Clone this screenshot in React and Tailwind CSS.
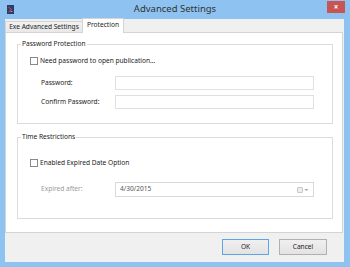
import React from "react";

function Checkbox() {
  return <div className="w-[8px] h-[8px] border border-[#8a8a8a] bg-white shrink-0" />;
}

function Group({ label, children, className = "" }) {
  return (
    <div className={"relative border border-[#dcdcdc] " + className}>
      <span className="absolute -top-[6px] left-[3px] bg-white px-[1px] leading-[10px] text-[6.6px] text-[#222]">
        {label}
      </span>
      {children}
    </div>
  );
}

export default function App() {
  return (
    <div className="w-[350px] h-[267px] bg-[#8ec3f1] flex flex-col font-['Noto_Sans',sans-serif] text-[#222] overflow-hidden">
      {/* Title bar */}
      <div className="h-[19px] shrink-0 grid grid-cols-[1fr_auto_1fr]">
        <div className="flex items-start pt-[5px] pl-[7px]">
          <svg width="7" height="9" viewBox="0 0 7 9">
            <rect x="0" y="0" width="7" height="9" fill="#2c3d66" />
            <path d="M1.5 2 L4.5 4.5 L1.5 7" stroke="#d9506a" strokeWidth="1" fill="none" />
            <path d="M3.5 6.5 L5.5 6.5" stroke="#e8a0b0" strokeWidth="0.8" />
          </svg>
        </div>
        <div className="flex items-center justify-center text-[9.5px] text-[#333] leading-none pb-[1px]">
          Advanced Settings
        </div>
        <div className="flex justify-end items-start pt-[1px] pr-[5px]">
          <div className="w-[18px] h-[12px] bg-[#c85454] flex items-center justify-center text-white text-[8px] leading-none font-bold">
            ×
          </div>
        </div>
      </div>

      {/* Content */}
      <div className="flex-1 ml-[5px] mr-[6px] mb-[5px] bg-[#f0f0f0] flex flex-col">
        {/* Tabs */}
        <div className="h-[13px] shrink-0 flex items-end text-[6.6px] leading-none">
          <div className="h-[11px] w-[78px] border border-b-0 border-[#d4d4d4] bg-gradient-to-b from-[#f2f2f2] to-[#e8e8e8] flex items-center justify-center">
            Exe Advanced Settings
          </div>
          <div className="relative z-10 -ml-[1px] -mb-[1px] h-[15px] w-[42px] border border-b-0 border-[#d4d4d4] bg-white flex items-start justify-center pt-[3px]">
            Protection
          </div>
        </div>

        {/* Panel */}
        <div className="h-[201px] shrink-0 mr-[1px] border border-[#d4d4d4] bg-white pt-[11px] pl-[11px] pr-[9px] flex flex-col text-[6.6px] leading-none">
          <Group label="Password Protection" className="h-[80px]">
            <div className="flex items-center mt-[12px] ml-[12px] gap-[2px]">
              <Checkbox />
              <span>Need password to open publication...</span>
            </div>
            <div className="flex items-center mt-[11px] ml-[23px]">
              <span className="w-[74px]">Password:</span>
              <div className="w-[199px] h-[14px] border border-[#e0e0e0] bg-white" />
            </div>
            <div className="flex items-center mt-[5px] ml-[23px]">
              <span className="w-[74px]">Confirm Password:</span>
              <div className="w-[199px] h-[14px] border border-[#e0e0e0] bg-white" />
            </div>
          </Group>

          <Group label="Time Restrictions" className="h-[82px] mt-[13px]">
            <div className="flex items-center mt-[21px] ml-[12px] gap-[2px]">
              <Checkbox />
              <span>Enabled Expired Date Option</span>
            </div>
            <div className="flex items-center mt-[15px] ml-[23px]">
              <span className="w-[74px] text-[#9a9a9a]">Expired after:</span>
              <div className="w-[199px] h-[15px] border border-[#d8d8d8] bg-white flex items-center pl-[4px] pr-[4px]">
                <span className="flex-1 text-[#555]">4/30/2015</span>
                <div className="w-[6px] h-[6px] border border-[#c8c8c8] bg-[#eeeeee] rounded-[1px]" />
                <svg width="5" height="4" viewBox="0 0 5 4" className="ml-[1px]">
                  <path d="M0.5 1 L4.5 1 L2.5 3 Z" fill="#a8a8a8" />
                </svg>
              </div>
            </div>
          </Group>
        </div>

        {/* Buttons */}
        <div className="flex-1 flex justify-end items-start pt-[6px] pr-[17px] gap-[10px] text-[6.6px] leading-none">
          <div className="w-[47px] h-[16px] border border-[#5fa3e8] bg-gradient-to-b from-[#f0f0f0] to-[#e3e3e3] flex items-center justify-center">
            OK
          </div>
          <div className="w-[48px] h-[16px] border border-[#b0b0b0] bg-gradient-to-b from-[#f0f0f0] to-[#e3e3e3] flex items-center justify-center">
            Cancel
          </div>
        </div>
      </div>
    </div>
  );
}
